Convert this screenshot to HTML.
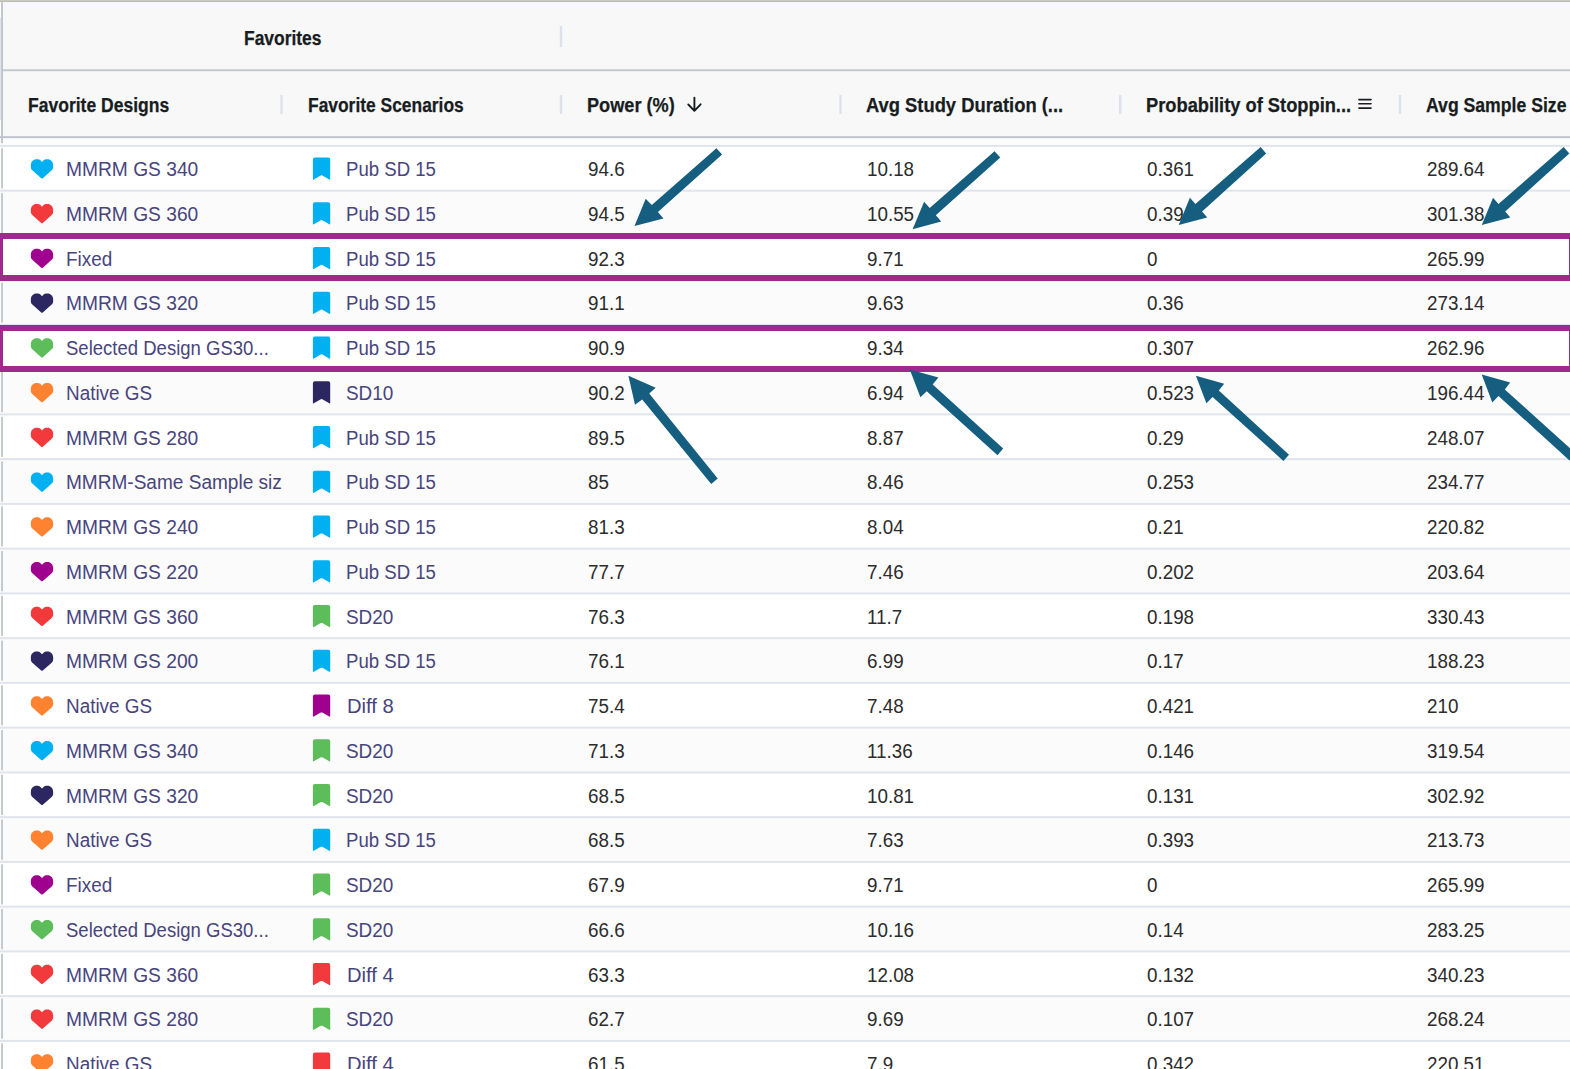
<!DOCTYPE html>
<html><head><meta charset="utf-8"><style>
html,body{margin:0;padding:0;background:#fff;}
body{width:1570px;height:1069px;overflow:hidden;position:relative;}
.ov{position:absolute;left:0;top:0;}
.hb,.tn,.td{position:absolute;white-space:nowrap;font-family:"Liberation Sans",sans-serif;height:30px;line-height:30px;margin-top:-15px;transform-origin:0 50%;}
.hb{font-weight:bold;font-size:19.5px;color:#181d1f;-webkit-text-stroke:0.25px #181d1f;}
.tn{font-size:20px;color:#48457c;}
.td{font-size:20px;color:#2c2c2c;}
</style></head><body>
<svg class="ov" width="1570" height="1069" viewBox="0 0 1570 1069"><rect x="0" y="190.65" width="1570" height="44.75" fill="#fbfbfb"/><rect x="0" y="280.15" width="1570" height="44.75" fill="#fbfbfb"/><rect x="0" y="369.65" width="1570" height="44.75" fill="#fbfbfb"/><rect x="0" y="459.15" width="1570" height="44.75" fill="#fbfbfb"/><rect x="0" y="548.65" width="1570" height="44.75" fill="#fbfbfb"/><rect x="0" y="638.15" width="1570" height="44.75" fill="#fbfbfb"/><rect x="0" y="727.65" width="1570" height="44.75" fill="#fbfbfb"/><rect x="0" y="817.15" width="1570" height="44.75" fill="#fbfbfb"/><rect x="0" y="906.65" width="1570" height="44.75" fill="#fbfbfb"/><rect x="0" y="996.15" width="1570" height="44.75" fill="#fbfbfb"/><rect x="0" y="1085.65" width="1570" height="44.75" fill="#fbfbfb"/><rect x="0" y="0" width="1570" height="1" fill="#c8c8c4"/><rect x="0" y="1" width="1570" height="1.2" fill="#bdb5dd"/><rect x="0" y="2.2" width="1570" height="134.5" fill="#f8f8f8"/><rect x="0" y="138" width="1570" height="7" fill="#fcfcfc"/><rect x="3" y="69.3" width="1567" height="1.9" fill="#c3c7cf"/><rect x="0" y="2.2" width="1" height="15.8" fill="#ffffff"/><rect x="0" y="18" width="1" height="102" fill="#dfe3ee"/><rect x="0" y="120" width="1" height="16.2" fill="#ffffff"/><rect x="0" y="136.2" width="1570" height="1.9" fill="#bdc1c9"/><rect x="280.30" y="95" width="2.4" height="19" fill="#dde1ec"/><rect x="559.80" y="95" width="2.4" height="19" fill="#dde1ec"/><rect x="839.30" y="95" width="2.4" height="19" fill="#dde1ec"/><rect x="1119.00" y="95" width="2.4" height="19" fill="#dde1ec"/><rect x="1398.80" y="95" width="2.4" height="19" fill="#dde1ec"/><rect x="559.8" y="26" width="2.4" height="21" fill="#dde1ec"/><rect x="0" y="144.90" width="1570" height="2" fill="#e0e4ec"/><rect x="0" y="189.65" width="1570" height="2" fill="#e0e4ec"/><rect x="0" y="234.40" width="1570" height="2" fill="#e0e4ec"/><rect x="0" y="279.15" width="1570" height="2" fill="#e0e4ec"/><rect x="0" y="323.90" width="1570" height="2" fill="#e0e4ec"/><rect x="0" y="368.65" width="1570" height="2" fill="#e0e4ec"/><rect x="0" y="413.40" width="1570" height="2" fill="#e0e4ec"/><rect x="0" y="458.15" width="1570" height="2" fill="#e0e4ec"/><rect x="0" y="502.90" width="1570" height="2" fill="#e0e4ec"/><rect x="0" y="547.65" width="1570" height="2" fill="#e0e4ec"/><rect x="0" y="592.40" width="1570" height="2" fill="#e0e4ec"/><rect x="0" y="637.15" width="1570" height="2" fill="#e0e4ec"/><rect x="0" y="681.90" width="1570" height="2" fill="#e0e4ec"/><rect x="0" y="726.65" width="1570" height="2" fill="#e0e4ec"/><rect x="0" y="771.40" width="1570" height="2" fill="#e0e4ec"/><rect x="0" y="816.15" width="1570" height="2" fill="#e0e4ec"/><rect x="0" y="860.90" width="1570" height="2" fill="#e0e4ec"/><rect x="0" y="905.65" width="1570" height="2" fill="#e0e4ec"/><rect x="0" y="950.40" width="1570" height="2" fill="#e0e4ec"/><rect x="0" y="995.15" width="1570" height="2" fill="#e0e4ec"/><rect x="0" y="1039.90" width="1570" height="2" fill="#e0e4ec"/><rect x="0" y="1084.65" width="1570" height="2" fill="#e0e4ec"/><rect x="1.1" y="2.2" width="1.9" height="141" fill="#c0c4cc"/><rect x="1.1" y="148.30" width="1.9" height="40.15" fill="#c3c7cf"/><rect x="1.1" y="193.05" width="1.9" height="40.15" fill="#c3c7cf"/><rect x="1.1" y="237.80" width="1.9" height="40.15" fill="#c3c7cf"/><rect x="1.1" y="282.55" width="1.9" height="40.15" fill="#c3c7cf"/><rect x="1.1" y="327.30" width="1.9" height="40.15" fill="#c3c7cf"/><rect x="1.1" y="372.05" width="1.9" height="40.15" fill="#c3c7cf"/><rect x="1.1" y="416.80" width="1.9" height="40.15" fill="#c3c7cf"/><rect x="1.1" y="461.55" width="1.9" height="40.15" fill="#c3c7cf"/><rect x="1.1" y="506.30" width="1.9" height="40.15" fill="#c3c7cf"/><rect x="1.1" y="551.05" width="1.9" height="40.15" fill="#c3c7cf"/><rect x="1.1" y="595.80" width="1.9" height="40.15" fill="#c3c7cf"/><rect x="1.1" y="640.55" width="1.9" height="40.15" fill="#c3c7cf"/><rect x="1.1" y="685.30" width="1.9" height="40.15" fill="#c3c7cf"/><rect x="1.1" y="730.05" width="1.9" height="40.15" fill="#c3c7cf"/><rect x="1.1" y="774.80" width="1.9" height="40.15" fill="#c3c7cf"/><rect x="1.1" y="819.55" width="1.9" height="40.15" fill="#c3c7cf"/><rect x="1.1" y="864.30" width="1.9" height="40.15" fill="#c3c7cf"/><rect x="1.1" y="909.05" width="1.9" height="40.15" fill="#c3c7cf"/><rect x="1.1" y="953.80" width="1.9" height="40.15" fill="#c3c7cf"/><rect x="1.1" y="998.55" width="1.9" height="40.15" fill="#c3c7cf"/><rect x="1.1" y="1043.30" width="1.9" height="40.15" fill="#c3c7cf"/><rect x="1.1" y="1088.05" width="1.9" height="40.15" fill="#c3c7cf"/><path transform="translate(30.85 159.22)" d="M11.15 19.3 C10.85 19.3 10.6 19.15 10.35 18.95 L1.2 10.9 C0.45 10.2 0 9.2 0 7.8 L0 5.9 C0 2.6 2.5 0 5.6 0 L7 0 C7.9 0 8.6 0.3 9.3 0.9 L11.15 2.7 L13 0.9 C13.7 0.3 14.4 0 15.3 0 L16.7 0 C19.8 0 22.3 2.6 22.3 5.9 L22.3 7.8 C22.3 9.2 21.85 10.2 21.1 10.9 L11.95 18.95 C11.7 19.15 11.45 19.3 11.15 19.3 Z" fill="#00b0f0"/><path transform="translate(312.90 157.47)" d="M0 2 Q0 0 2 0 L15.3 0 Q17.3 0 17.3 2 L17.3 21.6 Q17.3 22.6 16.4 22.1 L9.4 18.1 Q8.65 17.7 7.9 18.1 L0.9 22.1 Q0 22.6 0 21.6 Z" fill="#00b0f0"/><path transform="translate(30.85 203.97)" d="M11.15 19.3 C10.85 19.3 10.6 19.15 10.35 18.95 L1.2 10.9 C0.45 10.2 0 9.2 0 7.8 L0 5.9 C0 2.6 2.5 0 5.6 0 L7 0 C7.9 0 8.6 0.3 9.3 0.9 L11.15 2.7 L13 0.9 C13.7 0.3 14.4 0 15.3 0 L16.7 0 C19.8 0 22.3 2.6 22.3 5.9 L22.3 7.8 C22.3 9.2 21.85 10.2 21.1 10.9 L11.95 18.95 C11.7 19.15 11.45 19.3 11.15 19.3 Z" fill="#f23a3c"/><path transform="translate(312.90 202.22)" d="M0 2 Q0 0 2 0 L15.3 0 Q17.3 0 17.3 2 L17.3 21.6 Q17.3 22.6 16.4 22.1 L9.4 18.1 Q8.65 17.7 7.9 18.1 L0.9 22.1 Q0 22.6 0 21.6 Z" fill="#00b0f0"/><path transform="translate(30.85 248.72)" d="M11.15 19.3 C10.85 19.3 10.6 19.15 10.35 18.95 L1.2 10.9 C0.45 10.2 0 9.2 0 7.8 L0 5.9 C0 2.6 2.5 0 5.6 0 L7 0 C7.9 0 8.6 0.3 9.3 0.9 L11.15 2.7 L13 0.9 C13.7 0.3 14.4 0 15.3 0 L16.7 0 C19.8 0 22.3 2.6 22.3 5.9 L22.3 7.8 C22.3 9.2 21.85 10.2 21.1 10.9 L11.95 18.95 C11.7 19.15 11.45 19.3 11.15 19.3 Z" fill="#a0008e"/><path transform="translate(312.90 246.97)" d="M0 2 Q0 0 2 0 L15.3 0 Q17.3 0 17.3 2 L17.3 21.6 Q17.3 22.6 16.4 22.1 L9.4 18.1 Q8.65 17.7 7.9 18.1 L0.9 22.1 Q0 22.6 0 21.6 Z" fill="#00b0f0"/><path transform="translate(30.85 293.47)" d="M11.15 19.3 C10.85 19.3 10.6 19.15 10.35 18.95 L1.2 10.9 C0.45 10.2 0 9.2 0 7.8 L0 5.9 C0 2.6 2.5 0 5.6 0 L7 0 C7.9 0 8.6 0.3 9.3 0.9 L11.15 2.7 L13 0.9 C13.7 0.3 14.4 0 15.3 0 L16.7 0 C19.8 0 22.3 2.6 22.3 5.9 L22.3 7.8 C22.3 9.2 21.85 10.2 21.1 10.9 L11.95 18.95 C11.7 19.15 11.45 19.3 11.15 19.3 Z" fill="#2c2760"/><path transform="translate(312.90 291.72)" d="M0 2 Q0 0 2 0 L15.3 0 Q17.3 0 17.3 2 L17.3 21.6 Q17.3 22.6 16.4 22.1 L9.4 18.1 Q8.65 17.7 7.9 18.1 L0.9 22.1 Q0 22.6 0 21.6 Z" fill="#00b0f0"/><path transform="translate(30.85 338.22)" d="M11.15 19.3 C10.85 19.3 10.6 19.15 10.35 18.95 L1.2 10.9 C0.45 10.2 0 9.2 0 7.8 L0 5.9 C0 2.6 2.5 0 5.6 0 L7 0 C7.9 0 8.6 0.3 9.3 0.9 L11.15 2.7 L13 0.9 C13.7 0.3 14.4 0 15.3 0 L16.7 0 C19.8 0 22.3 2.6 22.3 5.9 L22.3 7.8 C22.3 9.2 21.85 10.2 21.1 10.9 L11.95 18.95 C11.7 19.15 11.45 19.3 11.15 19.3 Z" fill="#5cbd5a"/><path transform="translate(312.90 336.47)" d="M0 2 Q0 0 2 0 L15.3 0 Q17.3 0 17.3 2 L17.3 21.6 Q17.3 22.6 16.4 22.1 L9.4 18.1 Q8.65 17.7 7.9 18.1 L0.9 22.1 Q0 22.6 0 21.6 Z" fill="#00b0f0"/><path transform="translate(30.85 382.97)" d="M11.15 19.3 C10.85 19.3 10.6 19.15 10.35 18.95 L1.2 10.9 C0.45 10.2 0 9.2 0 7.8 L0 5.9 C0 2.6 2.5 0 5.6 0 L7 0 C7.9 0 8.6 0.3 9.3 0.9 L11.15 2.7 L13 0.9 C13.7 0.3 14.4 0 15.3 0 L16.7 0 C19.8 0 22.3 2.6 22.3 5.9 L22.3 7.8 C22.3 9.2 21.85 10.2 21.1 10.9 L11.95 18.95 C11.7 19.15 11.45 19.3 11.15 19.3 Z" fill="#ff8230"/><path transform="translate(312.90 381.22)" d="M0 2 Q0 0 2 0 L15.3 0 Q17.3 0 17.3 2 L17.3 21.6 Q17.3 22.6 16.4 22.1 L9.4 18.1 Q8.65 17.7 7.9 18.1 L0.9 22.1 Q0 22.6 0 21.6 Z" fill="#2c2760"/><path transform="translate(30.85 427.72)" d="M11.15 19.3 C10.85 19.3 10.6 19.15 10.35 18.95 L1.2 10.9 C0.45 10.2 0 9.2 0 7.8 L0 5.9 C0 2.6 2.5 0 5.6 0 L7 0 C7.9 0 8.6 0.3 9.3 0.9 L11.15 2.7 L13 0.9 C13.7 0.3 14.4 0 15.3 0 L16.7 0 C19.8 0 22.3 2.6 22.3 5.9 L22.3 7.8 C22.3 9.2 21.85 10.2 21.1 10.9 L11.95 18.95 C11.7 19.15 11.45 19.3 11.15 19.3 Z" fill="#f23a3c"/><path transform="translate(312.90 425.97)" d="M0 2 Q0 0 2 0 L15.3 0 Q17.3 0 17.3 2 L17.3 21.6 Q17.3 22.6 16.4 22.1 L9.4 18.1 Q8.65 17.7 7.9 18.1 L0.9 22.1 Q0 22.6 0 21.6 Z" fill="#00b0f0"/><path transform="translate(30.85 472.47)" d="M11.15 19.3 C10.85 19.3 10.6 19.15 10.35 18.95 L1.2 10.9 C0.45 10.2 0 9.2 0 7.8 L0 5.9 C0 2.6 2.5 0 5.6 0 L7 0 C7.9 0 8.6 0.3 9.3 0.9 L11.15 2.7 L13 0.9 C13.7 0.3 14.4 0 15.3 0 L16.7 0 C19.8 0 22.3 2.6 22.3 5.9 L22.3 7.8 C22.3 9.2 21.85 10.2 21.1 10.9 L11.95 18.95 C11.7 19.15 11.45 19.3 11.15 19.3 Z" fill="#00b0f0"/><path transform="translate(312.90 470.72)" d="M0 2 Q0 0 2 0 L15.3 0 Q17.3 0 17.3 2 L17.3 21.6 Q17.3 22.6 16.4 22.1 L9.4 18.1 Q8.65 17.7 7.9 18.1 L0.9 22.1 Q0 22.6 0 21.6 Z" fill="#00b0f0"/><path transform="translate(30.85 517.23)" d="M11.15 19.3 C10.85 19.3 10.6 19.15 10.35 18.95 L1.2 10.9 C0.45 10.2 0 9.2 0 7.8 L0 5.9 C0 2.6 2.5 0 5.6 0 L7 0 C7.9 0 8.6 0.3 9.3 0.9 L11.15 2.7 L13 0.9 C13.7 0.3 14.4 0 15.3 0 L16.7 0 C19.8 0 22.3 2.6 22.3 5.9 L22.3 7.8 C22.3 9.2 21.85 10.2 21.1 10.9 L11.95 18.95 C11.7 19.15 11.45 19.3 11.15 19.3 Z" fill="#ff8230"/><path transform="translate(312.90 515.48)" d="M0 2 Q0 0 2 0 L15.3 0 Q17.3 0 17.3 2 L17.3 21.6 Q17.3 22.6 16.4 22.1 L9.4 18.1 Q8.65 17.7 7.9 18.1 L0.9 22.1 Q0 22.6 0 21.6 Z" fill="#00b0f0"/><path transform="translate(30.85 561.98)" d="M11.15 19.3 C10.85 19.3 10.6 19.15 10.35 18.95 L1.2 10.9 C0.45 10.2 0 9.2 0 7.8 L0 5.9 C0 2.6 2.5 0 5.6 0 L7 0 C7.9 0 8.6 0.3 9.3 0.9 L11.15 2.7 L13 0.9 C13.7 0.3 14.4 0 15.3 0 L16.7 0 C19.8 0 22.3 2.6 22.3 5.9 L22.3 7.8 C22.3 9.2 21.85 10.2 21.1 10.9 L11.95 18.95 C11.7 19.15 11.45 19.3 11.15 19.3 Z" fill="#a0008e"/><path transform="translate(312.90 560.23)" d="M0 2 Q0 0 2 0 L15.3 0 Q17.3 0 17.3 2 L17.3 21.6 Q17.3 22.6 16.4 22.1 L9.4 18.1 Q8.65 17.7 7.9 18.1 L0.9 22.1 Q0 22.6 0 21.6 Z" fill="#00b0f0"/><path transform="translate(30.85 606.73)" d="M11.15 19.3 C10.85 19.3 10.6 19.15 10.35 18.95 L1.2 10.9 C0.45 10.2 0 9.2 0 7.8 L0 5.9 C0 2.6 2.5 0 5.6 0 L7 0 C7.9 0 8.6 0.3 9.3 0.9 L11.15 2.7 L13 0.9 C13.7 0.3 14.4 0 15.3 0 L16.7 0 C19.8 0 22.3 2.6 22.3 5.9 L22.3 7.8 C22.3 9.2 21.85 10.2 21.1 10.9 L11.95 18.95 C11.7 19.15 11.45 19.3 11.15 19.3 Z" fill="#f23a3c"/><path transform="translate(312.90 604.98)" d="M0 2 Q0 0 2 0 L15.3 0 Q17.3 0 17.3 2 L17.3 21.6 Q17.3 22.6 16.4 22.1 L9.4 18.1 Q8.65 17.7 7.9 18.1 L0.9 22.1 Q0 22.6 0 21.6 Z" fill="#5cbd5a"/><path transform="translate(30.85 651.48)" d="M11.15 19.3 C10.85 19.3 10.6 19.15 10.35 18.95 L1.2 10.9 C0.45 10.2 0 9.2 0 7.8 L0 5.9 C0 2.6 2.5 0 5.6 0 L7 0 C7.9 0 8.6 0.3 9.3 0.9 L11.15 2.7 L13 0.9 C13.7 0.3 14.4 0 15.3 0 L16.7 0 C19.8 0 22.3 2.6 22.3 5.9 L22.3 7.8 C22.3 9.2 21.85 10.2 21.1 10.9 L11.95 18.95 C11.7 19.15 11.45 19.3 11.15 19.3 Z" fill="#2c2760"/><path transform="translate(312.90 649.73)" d="M0 2 Q0 0 2 0 L15.3 0 Q17.3 0 17.3 2 L17.3 21.6 Q17.3 22.6 16.4 22.1 L9.4 18.1 Q8.65 17.7 7.9 18.1 L0.9 22.1 Q0 22.6 0 21.6 Z" fill="#00b0f0"/><path transform="translate(30.85 696.23)" d="M11.15 19.3 C10.85 19.3 10.6 19.15 10.35 18.95 L1.2 10.9 C0.45 10.2 0 9.2 0 7.8 L0 5.9 C0 2.6 2.5 0 5.6 0 L7 0 C7.9 0 8.6 0.3 9.3 0.9 L11.15 2.7 L13 0.9 C13.7 0.3 14.4 0 15.3 0 L16.7 0 C19.8 0 22.3 2.6 22.3 5.9 L22.3 7.8 C22.3 9.2 21.85 10.2 21.1 10.9 L11.95 18.95 C11.7 19.15 11.45 19.3 11.15 19.3 Z" fill="#ff8230"/><path transform="translate(312.90 694.48)" d="M0 2 Q0 0 2 0 L15.3 0 Q17.3 0 17.3 2 L17.3 21.6 Q17.3 22.6 16.4 22.1 L9.4 18.1 Q8.65 17.7 7.9 18.1 L0.9 22.1 Q0 22.6 0 21.6 Z" fill="#a0008e"/><path transform="translate(30.85 740.98)" d="M11.15 19.3 C10.85 19.3 10.6 19.15 10.35 18.95 L1.2 10.9 C0.45 10.2 0 9.2 0 7.8 L0 5.9 C0 2.6 2.5 0 5.6 0 L7 0 C7.9 0 8.6 0.3 9.3 0.9 L11.15 2.7 L13 0.9 C13.7 0.3 14.4 0 15.3 0 L16.7 0 C19.8 0 22.3 2.6 22.3 5.9 L22.3 7.8 C22.3 9.2 21.85 10.2 21.1 10.9 L11.95 18.95 C11.7 19.15 11.45 19.3 11.15 19.3 Z" fill="#00b0f0"/><path transform="translate(312.90 739.23)" d="M0 2 Q0 0 2 0 L15.3 0 Q17.3 0 17.3 2 L17.3 21.6 Q17.3 22.6 16.4 22.1 L9.4 18.1 Q8.65 17.7 7.9 18.1 L0.9 22.1 Q0 22.6 0 21.6 Z" fill="#5cbd5a"/><path transform="translate(30.85 785.73)" d="M11.15 19.3 C10.85 19.3 10.6 19.15 10.35 18.95 L1.2 10.9 C0.45 10.2 0 9.2 0 7.8 L0 5.9 C0 2.6 2.5 0 5.6 0 L7 0 C7.9 0 8.6 0.3 9.3 0.9 L11.15 2.7 L13 0.9 C13.7 0.3 14.4 0 15.3 0 L16.7 0 C19.8 0 22.3 2.6 22.3 5.9 L22.3 7.8 C22.3 9.2 21.85 10.2 21.1 10.9 L11.95 18.95 C11.7 19.15 11.45 19.3 11.15 19.3 Z" fill="#2c2760"/><path transform="translate(312.90 783.98)" d="M0 2 Q0 0 2 0 L15.3 0 Q17.3 0 17.3 2 L17.3 21.6 Q17.3 22.6 16.4 22.1 L9.4 18.1 Q8.65 17.7 7.9 18.1 L0.9 22.1 Q0 22.6 0 21.6 Z" fill="#5cbd5a"/><path transform="translate(30.85 830.48)" d="M11.15 19.3 C10.85 19.3 10.6 19.15 10.35 18.95 L1.2 10.9 C0.45 10.2 0 9.2 0 7.8 L0 5.9 C0 2.6 2.5 0 5.6 0 L7 0 C7.9 0 8.6 0.3 9.3 0.9 L11.15 2.7 L13 0.9 C13.7 0.3 14.4 0 15.3 0 L16.7 0 C19.8 0 22.3 2.6 22.3 5.9 L22.3 7.8 C22.3 9.2 21.85 10.2 21.1 10.9 L11.95 18.95 C11.7 19.15 11.45 19.3 11.15 19.3 Z" fill="#ff8230"/><path transform="translate(312.90 828.73)" d="M0 2 Q0 0 2 0 L15.3 0 Q17.3 0 17.3 2 L17.3 21.6 Q17.3 22.6 16.4 22.1 L9.4 18.1 Q8.65 17.7 7.9 18.1 L0.9 22.1 Q0 22.6 0 21.6 Z" fill="#00b0f0"/><path transform="translate(30.85 875.23)" d="M11.15 19.3 C10.85 19.3 10.6 19.15 10.35 18.95 L1.2 10.9 C0.45 10.2 0 9.2 0 7.8 L0 5.9 C0 2.6 2.5 0 5.6 0 L7 0 C7.9 0 8.6 0.3 9.3 0.9 L11.15 2.7 L13 0.9 C13.7 0.3 14.4 0 15.3 0 L16.7 0 C19.8 0 22.3 2.6 22.3 5.9 L22.3 7.8 C22.3 9.2 21.85 10.2 21.1 10.9 L11.95 18.95 C11.7 19.15 11.45 19.3 11.15 19.3 Z" fill="#a0008e"/><path transform="translate(312.90 873.48)" d="M0 2 Q0 0 2 0 L15.3 0 Q17.3 0 17.3 2 L17.3 21.6 Q17.3 22.6 16.4 22.1 L9.4 18.1 Q8.65 17.7 7.9 18.1 L0.9 22.1 Q0 22.6 0 21.6 Z" fill="#5cbd5a"/><path transform="translate(30.85 919.98)" d="M11.15 19.3 C10.85 19.3 10.6 19.15 10.35 18.95 L1.2 10.9 C0.45 10.2 0 9.2 0 7.8 L0 5.9 C0 2.6 2.5 0 5.6 0 L7 0 C7.9 0 8.6 0.3 9.3 0.9 L11.15 2.7 L13 0.9 C13.7 0.3 14.4 0 15.3 0 L16.7 0 C19.8 0 22.3 2.6 22.3 5.9 L22.3 7.8 C22.3 9.2 21.85 10.2 21.1 10.9 L11.95 18.95 C11.7 19.15 11.45 19.3 11.15 19.3 Z" fill="#5cbd5a"/><path transform="translate(312.90 918.23)" d="M0 2 Q0 0 2 0 L15.3 0 Q17.3 0 17.3 2 L17.3 21.6 Q17.3 22.6 16.4 22.1 L9.4 18.1 Q8.65 17.7 7.9 18.1 L0.9 22.1 Q0 22.6 0 21.6 Z" fill="#5cbd5a"/><path transform="translate(30.85 964.73)" d="M11.15 19.3 C10.85 19.3 10.6 19.15 10.35 18.95 L1.2 10.9 C0.45 10.2 0 9.2 0 7.8 L0 5.9 C0 2.6 2.5 0 5.6 0 L7 0 C7.9 0 8.6 0.3 9.3 0.9 L11.15 2.7 L13 0.9 C13.7 0.3 14.4 0 15.3 0 L16.7 0 C19.8 0 22.3 2.6 22.3 5.9 L22.3 7.8 C22.3 9.2 21.85 10.2 21.1 10.9 L11.95 18.95 C11.7 19.15 11.45 19.3 11.15 19.3 Z" fill="#f23a3c"/><path transform="translate(312.90 962.98)" d="M0 2 Q0 0 2 0 L15.3 0 Q17.3 0 17.3 2 L17.3 21.6 Q17.3 22.6 16.4 22.1 L9.4 18.1 Q8.65 17.7 7.9 18.1 L0.9 22.1 Q0 22.6 0 21.6 Z" fill="#f23a3c"/><path transform="translate(30.85 1009.48)" d="M11.15 19.3 C10.85 19.3 10.6 19.15 10.35 18.95 L1.2 10.9 C0.45 10.2 0 9.2 0 7.8 L0 5.9 C0 2.6 2.5 0 5.6 0 L7 0 C7.9 0 8.6 0.3 9.3 0.9 L11.15 2.7 L13 0.9 C13.7 0.3 14.4 0 15.3 0 L16.7 0 C19.8 0 22.3 2.6 22.3 5.9 L22.3 7.8 C22.3 9.2 21.85 10.2 21.1 10.9 L11.95 18.95 C11.7 19.15 11.45 19.3 11.15 19.3 Z" fill="#f23a3c"/><path transform="translate(312.90 1007.73)" d="M0 2 Q0 0 2 0 L15.3 0 Q17.3 0 17.3 2 L17.3 21.6 Q17.3 22.6 16.4 22.1 L9.4 18.1 Q8.65 17.7 7.9 18.1 L0.9 22.1 Q0 22.6 0 21.6 Z" fill="#5cbd5a"/><path transform="translate(30.85 1054.23)" d="M11.15 19.3 C10.85 19.3 10.6 19.15 10.35 18.95 L1.2 10.9 C0.45 10.2 0 9.2 0 7.8 L0 5.9 C0 2.6 2.5 0 5.6 0 L7 0 C7.9 0 8.6 0.3 9.3 0.9 L11.15 2.7 L13 0.9 C13.7 0.3 14.4 0 15.3 0 L16.7 0 C19.8 0 22.3 2.6 22.3 5.9 L22.3 7.8 C22.3 9.2 21.85 10.2 21.1 10.9 L11.95 18.95 C11.7 19.15 11.45 19.3 11.15 19.3 Z" fill="#ff8230"/><path transform="translate(312.90 1052.48)" d="M0 2 Q0 0 2 0 L15.3 0 Q17.3 0 17.3 2 L17.3 21.6 Q17.3 22.6 16.4 22.1 L9.4 18.1 Q8.65 17.7 7.9 18.1 L0.9 22.1 Q0 22.6 0 21.6 Z" fill="#f23a3c"/><path d="M694.4 97.6 L694.4 110.4 M688.3 104.5 L694.4 110.8 L700.6 104.3" stroke="#181d1f" stroke-width="1.9" fill="none" stroke-linecap="round" stroke-linejoin="round"/><line x1="1358.9" y1="99.6" x2="1371" y2="99.6" stroke="#181d1f" stroke-width="1.6" stroke-linecap="round"/><line x1="1358.9" y1="103.8" x2="1371" y2="103.8" stroke="#181d1f" stroke-width="1.6" stroke-linecap="round"/><line x1="1358.9" y1="108.1" x2="1371" y2="108.1" stroke="#181d1f" stroke-width="1.6" stroke-linecap="round"/></svg>
<div class="hb" style="left:244.3px;top:37.60px;transform:scaleX(0.8935);">Favorites</div><div class="hb" style="left:28px;top:105.20px;transform:scaleX(0.8984);">Favorite Designs</div><div class="hb" style="left:307.5px;top:105.20px;transform:scaleX(0.8925);">Favorite Scenarios</div><div class="hb" style="left:587px;top:105.20px;transform:scaleX(0.9305);">Power (%)</div><div class="hb" style="left:866.3px;top:105.20px;transform:scaleX(0.9412);">Avg Study Duration (...</div><div class="hb" style="left:1146.3px;top:105.20px;transform:scaleX(0.9373);">Probability of Stoppin...</div><div class="hb" style="left:1426.2px;top:105.20px;transform:scaleX(0.9042);">Avg Sample Size</div><div class="tn" style="left:66.4px;top:169.18px;transform:scaleX(0.9600);width:224.6px;overflow:hidden;">MMRM GS 340</div><div class="tn" style="left:346.3px;top:169.18px;transform:scaleX(0.9300);">Pub SD 15</div><div class="td" style="left:587.5px;top:169.18px;transform:scaleX(0.9400);">94.6</div><div class="td" style="left:867.0px;top:169.18px;transform:scaleX(0.9400);">10.18</div><div class="td" style="left:1146.7px;top:169.18px;transform:scaleX(0.9400);">0.361</div><div class="td" style="left:1426.6px;top:169.18px;transform:scaleX(0.9400);">289.64</div><div class="tn" style="left:66.4px;top:213.93px;transform:scaleX(0.9600);width:224.6px;overflow:hidden;">MMRM GS 360</div><div class="tn" style="left:346.3px;top:213.93px;transform:scaleX(0.9300);">Pub SD 15</div><div class="td" style="left:587.5px;top:213.93px;transform:scaleX(0.9400);">94.5</div><div class="td" style="left:867.0px;top:213.93px;transform:scaleX(0.9400);">10.55</div><div class="td" style="left:1146.7px;top:213.93px;transform:scaleX(0.9400);">0.39</div><div class="td" style="left:1426.6px;top:213.93px;transform:scaleX(0.9400);">301.38</div><div class="tn" style="left:66.4px;top:258.67px;transform:scaleX(0.9450);width:228.1px;overflow:hidden;">Fixed</div><div class="tn" style="left:346.3px;top:258.67px;transform:scaleX(0.9300);">Pub SD 15</div><div class="td" style="left:587.5px;top:258.67px;transform:scaleX(0.9400);">92.3</div><div class="td" style="left:867.0px;top:258.67px;transform:scaleX(0.9400);">9.71</div><div class="td" style="left:1146.7px;top:258.67px;transform:scaleX(0.9400);">0</div><div class="td" style="left:1426.6px;top:258.67px;transform:scaleX(0.9400);">265.99</div><div class="tn" style="left:66.4px;top:303.42px;transform:scaleX(0.9600);width:224.6px;overflow:hidden;">MMRM GS 320</div><div class="tn" style="left:346.3px;top:303.42px;transform:scaleX(0.9300);">Pub SD 15</div><div class="td" style="left:587.5px;top:303.42px;transform:scaleX(0.9400);">91.1</div><div class="td" style="left:867.0px;top:303.42px;transform:scaleX(0.9400);">9.63</div><div class="td" style="left:1146.7px;top:303.42px;transform:scaleX(0.9400);">0.36</div><div class="td" style="left:1426.6px;top:303.42px;transform:scaleX(0.9400);">273.14</div><div class="tn" style="left:66.4px;top:348.17px;transform:scaleX(0.9260);width:232.8px;overflow:hidden;">Selected Design GS30...</div><div class="tn" style="left:346.3px;top:348.17px;transform:scaleX(0.9300);">Pub SD 15</div><div class="td" style="left:587.5px;top:348.17px;transform:scaleX(0.9400);">90.9</div><div class="td" style="left:867.0px;top:348.17px;transform:scaleX(0.9400);">9.34</div><div class="td" style="left:1146.7px;top:348.17px;transform:scaleX(0.9400);">0.307</div><div class="td" style="left:1426.6px;top:348.17px;transform:scaleX(0.9400);">262.96</div><div class="tn" style="left:66.4px;top:392.92px;transform:scaleX(0.9450);width:228.1px;overflow:hidden;">Native GS</div><div class="tn" style="left:346.3px;top:392.92px;transform:scaleX(0.9450);">SD10</div><div class="td" style="left:587.5px;top:392.92px;transform:scaleX(0.9400);">90.2</div><div class="td" style="left:867.0px;top:392.92px;transform:scaleX(0.9400);">6.94</div><div class="td" style="left:1146.7px;top:392.92px;transform:scaleX(0.9400);">0.523</div><div class="td" style="left:1426.6px;top:392.92px;transform:scaleX(0.9400);">196.44</div><div class="tn" style="left:66.4px;top:437.67px;transform:scaleX(0.9600);width:224.6px;overflow:hidden;">MMRM GS 280</div><div class="tn" style="left:346.3px;top:437.67px;transform:scaleX(0.9300);">Pub SD 15</div><div class="td" style="left:587.5px;top:437.67px;transform:scaleX(0.9400);">89.5</div><div class="td" style="left:867.0px;top:437.67px;transform:scaleX(0.9400);">8.87</div><div class="td" style="left:1146.7px;top:437.67px;transform:scaleX(0.9400);">0.29</div><div class="td" style="left:1426.6px;top:437.67px;transform:scaleX(0.9400);">248.07</div><div class="tn" style="left:66.4px;top:482.42px;transform:scaleX(0.9520);width:226.5px;overflow:hidden;">MMRM-Same Sample siz</div><div class="tn" style="left:346.3px;top:482.42px;transform:scaleX(0.9300);">Pub SD 15</div><div class="td" style="left:587.5px;top:482.42px;transform:scaleX(0.9400);">85</div><div class="td" style="left:867.0px;top:482.42px;transform:scaleX(0.9400);">8.46</div><div class="td" style="left:1146.7px;top:482.42px;transform:scaleX(0.9400);">0.253</div><div class="td" style="left:1426.6px;top:482.42px;transform:scaleX(0.9400);">234.77</div><div class="tn" style="left:66.4px;top:527.17px;transform:scaleX(0.9600);width:224.6px;overflow:hidden;">MMRM GS 240</div><div class="tn" style="left:346.3px;top:527.17px;transform:scaleX(0.9300);">Pub SD 15</div><div class="td" style="left:587.5px;top:527.17px;transform:scaleX(0.9400);">81.3</div><div class="td" style="left:867.0px;top:527.17px;transform:scaleX(0.9400);">8.04</div><div class="td" style="left:1146.7px;top:527.17px;transform:scaleX(0.9400);">0.21</div><div class="td" style="left:1426.6px;top:527.17px;transform:scaleX(0.9400);">220.82</div><div class="tn" style="left:66.4px;top:571.92px;transform:scaleX(0.9600);width:224.6px;overflow:hidden;">MMRM GS 220</div><div class="tn" style="left:346.3px;top:571.92px;transform:scaleX(0.9300);">Pub SD 15</div><div class="td" style="left:587.5px;top:571.92px;transform:scaleX(0.9400);">77.7</div><div class="td" style="left:867.0px;top:571.92px;transform:scaleX(0.9400);">7.46</div><div class="td" style="left:1146.7px;top:571.92px;transform:scaleX(0.9400);">0.202</div><div class="td" style="left:1426.6px;top:571.92px;transform:scaleX(0.9400);">203.64</div><div class="tn" style="left:66.4px;top:616.67px;transform:scaleX(0.9600);width:224.6px;overflow:hidden;">MMRM GS 360</div><div class="tn" style="left:346.3px;top:616.67px;transform:scaleX(0.9450);">SD20</div><div class="td" style="left:587.5px;top:616.67px;transform:scaleX(0.9400);">76.3</div><div class="td" style="left:867.0px;top:616.67px;transform:scaleX(0.9400);">11.7</div><div class="td" style="left:1146.7px;top:616.67px;transform:scaleX(0.9400);">0.198</div><div class="td" style="left:1426.6px;top:616.67px;transform:scaleX(0.9400);">330.43</div><div class="tn" style="left:66.4px;top:661.42px;transform:scaleX(0.9600);width:224.6px;overflow:hidden;">MMRM GS 200</div><div class="tn" style="left:346.3px;top:661.42px;transform:scaleX(0.9300);">Pub SD 15</div><div class="td" style="left:587.5px;top:661.42px;transform:scaleX(0.9400);">76.1</div><div class="td" style="left:867.0px;top:661.42px;transform:scaleX(0.9400);">6.99</div><div class="td" style="left:1146.7px;top:661.42px;transform:scaleX(0.9400);">0.17</div><div class="td" style="left:1426.6px;top:661.42px;transform:scaleX(0.9400);">188.23</div><div class="tn" style="left:66.4px;top:706.17px;transform:scaleX(0.9450);width:228.1px;overflow:hidden;">Native GS</div><div class="tn" style="left:347.3px;top:706.17px;transform:scaleX(1.0100);">Diff 8</div><div class="td" style="left:587.5px;top:706.17px;transform:scaleX(0.9400);">75.4</div><div class="td" style="left:867.0px;top:706.17px;transform:scaleX(0.9400);">7.48</div><div class="td" style="left:1146.7px;top:706.17px;transform:scaleX(0.9400);">0.421</div><div class="td" style="left:1426.6px;top:706.17px;transform:scaleX(0.9400);">210</div><div class="tn" style="left:66.4px;top:750.92px;transform:scaleX(0.9600);width:224.6px;overflow:hidden;">MMRM GS 340</div><div class="tn" style="left:346.3px;top:750.92px;transform:scaleX(0.9450);">SD20</div><div class="td" style="left:587.5px;top:750.92px;transform:scaleX(0.9400);">71.3</div><div class="td" style="left:867.0px;top:750.92px;transform:scaleX(0.9400);">11.36</div><div class="td" style="left:1146.7px;top:750.92px;transform:scaleX(0.9400);">0.146</div><div class="td" style="left:1426.6px;top:750.92px;transform:scaleX(0.9400);">319.54</div><div class="tn" style="left:66.4px;top:795.67px;transform:scaleX(0.9600);width:224.6px;overflow:hidden;">MMRM GS 320</div><div class="tn" style="left:346.3px;top:795.67px;transform:scaleX(0.9450);">SD20</div><div class="td" style="left:587.5px;top:795.67px;transform:scaleX(0.9400);">68.5</div><div class="td" style="left:867.0px;top:795.67px;transform:scaleX(0.9400);">10.81</div><div class="td" style="left:1146.7px;top:795.67px;transform:scaleX(0.9400);">0.131</div><div class="td" style="left:1426.6px;top:795.67px;transform:scaleX(0.9400);">302.92</div><div class="tn" style="left:66.4px;top:840.42px;transform:scaleX(0.9450);width:228.1px;overflow:hidden;">Native GS</div><div class="tn" style="left:346.3px;top:840.42px;transform:scaleX(0.9300);">Pub SD 15</div><div class="td" style="left:587.5px;top:840.42px;transform:scaleX(0.9400);">68.5</div><div class="td" style="left:867.0px;top:840.42px;transform:scaleX(0.9400);">7.63</div><div class="td" style="left:1146.7px;top:840.42px;transform:scaleX(0.9400);">0.393</div><div class="td" style="left:1426.6px;top:840.42px;transform:scaleX(0.9400);">213.73</div><div class="tn" style="left:66.4px;top:885.17px;transform:scaleX(0.9450);width:228.1px;overflow:hidden;">Fixed</div><div class="tn" style="left:346.3px;top:885.17px;transform:scaleX(0.9450);">SD20</div><div class="td" style="left:587.5px;top:885.17px;transform:scaleX(0.9400);">67.9</div><div class="td" style="left:867.0px;top:885.17px;transform:scaleX(0.9400);">9.71</div><div class="td" style="left:1146.7px;top:885.17px;transform:scaleX(0.9400);">0</div><div class="td" style="left:1426.6px;top:885.17px;transform:scaleX(0.9400);">265.99</div><div class="tn" style="left:66.4px;top:929.92px;transform:scaleX(0.9260);width:232.8px;overflow:hidden;">Selected Design GS30...</div><div class="tn" style="left:346.3px;top:929.92px;transform:scaleX(0.9450);">SD20</div><div class="td" style="left:587.5px;top:929.92px;transform:scaleX(0.9400);">66.6</div><div class="td" style="left:867.0px;top:929.92px;transform:scaleX(0.9400);">10.16</div><div class="td" style="left:1146.7px;top:929.92px;transform:scaleX(0.9400);">0.14</div><div class="td" style="left:1426.6px;top:929.92px;transform:scaleX(0.9400);">283.25</div><div class="tn" style="left:66.4px;top:974.67px;transform:scaleX(0.9600);width:224.6px;overflow:hidden;">MMRM GS 360</div><div class="tn" style="left:347.3px;top:974.67px;transform:scaleX(1.0100);">Diff 4</div><div class="td" style="left:587.5px;top:974.67px;transform:scaleX(0.9400);">63.3</div><div class="td" style="left:867.0px;top:974.67px;transform:scaleX(0.9400);">12.08</div><div class="td" style="left:1146.7px;top:974.67px;transform:scaleX(0.9400);">0.132</div><div class="td" style="left:1426.6px;top:974.67px;transform:scaleX(0.9400);">340.23</div><div class="tn" style="left:66.4px;top:1019.42px;transform:scaleX(0.9600);width:224.6px;overflow:hidden;">MMRM GS 280</div><div class="tn" style="left:346.3px;top:1019.42px;transform:scaleX(0.9450);">SD20</div><div class="td" style="left:587.5px;top:1019.42px;transform:scaleX(0.9400);">62.7</div><div class="td" style="left:867.0px;top:1019.42px;transform:scaleX(0.9400);">9.69</div><div class="td" style="left:1146.7px;top:1019.42px;transform:scaleX(0.9400);">0.107</div><div class="td" style="left:1426.6px;top:1019.42px;transform:scaleX(0.9400);">268.24</div><div class="tn" style="left:66.4px;top:1064.18px;transform:scaleX(0.9450);width:228.1px;overflow:hidden;">Native GS</div><div class="tn" style="left:347.3px;top:1064.18px;transform:scaleX(1.0100);">Diff 4</div><div class="td" style="left:587.5px;top:1064.18px;transform:scaleX(0.9400);">61.5</div><div class="td" style="left:867.0px;top:1064.18px;transform:scaleX(0.9400);">7.9</div><div class="td" style="left:1146.7px;top:1064.18px;transform:scaleX(0.9400);">0.342</div><div class="td" style="left:1426.6px;top:1064.18px;transform:scaleX(0.9400);">220.51</div>
<svg class="ov" width="1570" height="1069" viewBox="0 0 1570 1069"><rect x="0" y="233.00" width="1570" height="6" fill="#9e2a8f"/><rect x="0" y="275.00" width="1570" height="6" fill="#9e2a8f"/><rect x="0" y="233.00" width="3" height="48.00" fill="#9e2a8f"/><rect x="1569" y="233.00" width="1" height="48.00" fill="#9e2a8f"/><rect x="0" y="325.00" width="1570" height="6" fill="#9e2a8f"/><rect x="0" y="366.00" width="1570" height="6" fill="#9e2a8f"/><rect x="0" y="325.00" width="3" height="47.00" fill="#9e2a8f"/><rect x="1569" y="325.00" width="1" height="47.00" fill="#9e2a8f"/><polygon points="716.4,148.2 722.1,154.5 657.9,212.0 663.5,218.6 634.5,226.1 645.7,198.7 651.8,205.0" fill="#165e80"/><polygon points="994.5,151.2 1000.3,157.6 935.8,215.3 941.2,221.6 912.6,229.3 924.1,201.7 929.7,208.1" fill="#165e80"/><polygon points="1260.6,147.0 1266.2,153.6 1202.1,211.6 1207.2,217.5 1178.7,225.1 1189.9,197.8 1195.4,204.1" fill="#165e80"/><polygon points="1563.7,147.0 1569.3,153.6 1505.2,211.6 1510.3,217.5 1481.8,225.1 1493.0,197.8 1498.5,204.1" fill="#165e80"/><polygon points="628.4,375.8 655.7,387.8 649.2,393.4 717.7,478.5 711.2,484.1 642.2,399.5 635.0,404.8" fill="#165e80"/><polygon points="909.8,369.5 938.4,377.6 932.7,384.6 1003.2,448.5 997.5,455.3 926.7,391.2 920.4,397.3" fill="#165e80"/><polygon points="1195.9,375.8 1224.2,383.7 1218.8,390.4 1289.0,454.8 1283.4,460.9 1212.6,397.0 1206.4,403.2" fill="#165e80"/><polygon points="1481.7,374.6 1510.2,382.6 1504.8,389.5 1575.8,453.5 1569.5,460.5 1498.5,395.9 1492.3,402.4" fill="#165e80"/></svg>
</body></html>
